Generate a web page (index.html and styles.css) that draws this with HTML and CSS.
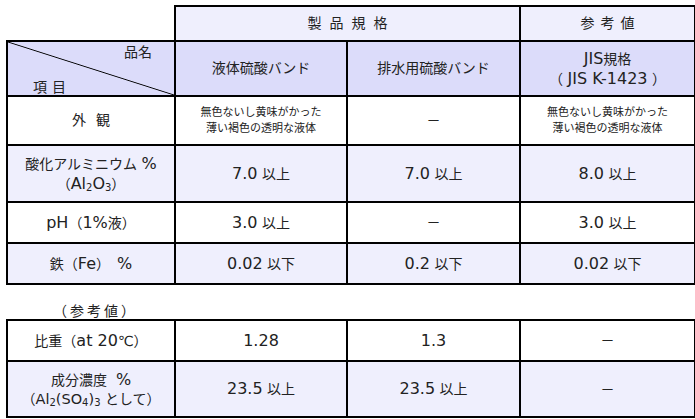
FILE: index.html
```html
<!DOCTYPE html>
<html lang="ja">
<head>
<meta charset="utf-8">
<title>硫酸バンド 規格</title>
<link rel="stylesheet" href="styles.css">
</head>
<body>
<div class="page">
  <table class="spec">
    <colgroup><col class="c1"><col class="c2"><col class="c3"><col class="c4"></colgroup>
    <tr class="rh1">
      <td class="blank"></td>
      <th colspan="2" class="hd"><span class="sp-a">製品規格</span></th>
      <th class="hd"><span class="sp-b">参考値</span></th>
    </tr>
    <tr class="rh2">
      <th class="diag"><div class="diag-in"><span class="hn">品名</span><span class="hk">項目</span></div></th>
      <th class="hd2">液体硫酸バンド</th>
      <th class="hd2">排水用硫酸バンド</th>
      <th class="hd2"><span class="n">JIS</span>規格<br>（ <span class="n">JIS K-1423</span> ）</th>
    </tr>
    <tr class="r-app">
      <td><span class="sp-c">外観</span></td>
      <td class="small">無色ないし黄味がかった<br>薄い褐色の透明な液体</td>
      <td><span class="dash">－</span></td>
      <td class="small">無色ないし黄味がかった<br>薄い褐色の透明な液体</td>
    </tr>
    <tr class="r-al alt">
      <td>酸化アルミニウム <span class="n">%</span><br>（<span class="n">Al<span class="sub">2</span>O<span class="sub">3</span></span>）</td>
      <td><span class="n">7.0</span> 以上</td>
      <td><span class="n">7.0</span> 以上</td>
      <td><span class="n">8.0</span> 以上</td>
    </tr>
    <tr class="r-ph">
      <td><span class="n">pH</span>（<span class="n">1%</span>液）</td>
      <td><span class="n">3.0</span> 以上</td>
      <td><span class="dash">－</span></td>
      <td><span class="n">3.0</span> 以上</td>
    </tr>
    <tr class="r-fe alt">
      <td>鉄（<span class="n">Fe</span>）　<span class="n">%</span></td>
      <td><span class="n">0.02</span> 以下</td>
      <td><span class="n">0.2</span> 以下</td>
      <td><span class="n">0.02</span> 以下</td>
    </tr>
  </table>

  <div class="note"><span class="sp-d">（参考値）</span></div>

  <table class="spec">
    <colgroup><col class="c1"><col class="c2"><col class="c3"><col class="c4"></colgroup>
    <tr class="r-sg">
      <td>比重（<span class="n">at 20</span>℃）</td>
      <td><span class="n">1.28</span></td>
      <td><span class="n">1.3</span></td>
      <td><span class="dash">－</span></td>
    </tr>
    <tr class="r-cc alt">
      <td>成分濃度<span class="pct n">%</span><br>（<span class="n nsm">Al<span class="sub">2</span>(SO<span class="sub">4</span>)<span class="sub">3</span></span> として）</td>
      <td><span class="n">23.5</span> 以上</td>
      <td><span class="n">23.5</span> 以上</td>
      <td><span class="dash">－</span></td>
    </tr>
  </table>
</div>
</body>
</html>
```

FILE: styles.css
```css
html, body {
  margin: 0;
  padding: 0;
  background: #ffffff;
}

body {
  font-family: "DejaVu Sans", "Noto Sans CJK JP", sans-serif;
  font-size: 14px;
  color: #222222;
}

.page {
  padding: 5px 0 0 6px;
}

.spec {
  border-collapse: collapse;
  table-layout: fixed;
  width: 688px;
}

.c1 { width: 168px; }
.c2 { width: 172px; }
.c3 { width: 173px; }
.c4 { width: 175px; }

.spec td,
.spec th {
  border: 2px solid #000000;
  padding: 0;
  text-align: center;
  vertical-align: middle;
  font-weight: normal;
  line-height: 19px;
  background: #ffffff;
}

.spec td.blank {
  border: none;
  background: transparent;
}

.spec .hd {
  background: #efeffd;
}

.spec .hd2 {
  background: #dcdcfa;
}

.spec .alt td {
  background: #efeffd;
}

.rh1 { height: 35px; }
.rh2 { height: 55px; }
.r-app { height: 49px; }
.r-al { height: 57px; }
.r-ph { height: 41px; }
.r-fe { height: 41px; }
.r-sg { height: 41px; }
.r-cc { height: 56px; }

.sp-a { letter-spacing: 8px; padding-left: 8px; }
.sp-b { letter-spacing: 6px; padding-left: 6px; }
.sp-c { letter-spacing: 10px; padding-left: 10px; }
.sp-d { letter-spacing: 3px; }

.spec th.diag {
  background: linear-gradient(to top right, #dcdcfa calc(50% - 0.9px), #000000 50%, #dcdcfa calc(50% + 0.9px));
}

.diag-in {
  display: flex;
  flex-direction: column;
  justify-content: space-between;
  height: 53px;
  box-sizing: border-box;
  padding: 2px 22px 0 25px;
  line-height: 16px;
}

.hn { align-self: flex-end; }
.hk { align-self: flex-start; letter-spacing: 5px; }

.n {
  font-size: 16px;
}

.n.nsm {
  font-size: 14.5px;
}

.pct {
  margin-left: 9px;
}

.sub {
  font-size: 10px;
  vertical-align: -2px;
  line-height: 0;
}

.small {
  font-size: 11px;
}

.spec td.small {
  line-height: 16px;
}

.dash {
  font-size: 14px;
}

.note {
  margin-top: 18px;
  padding-left: 47px;
  line-height: 16px;
  font-size: 14px;
}
```
